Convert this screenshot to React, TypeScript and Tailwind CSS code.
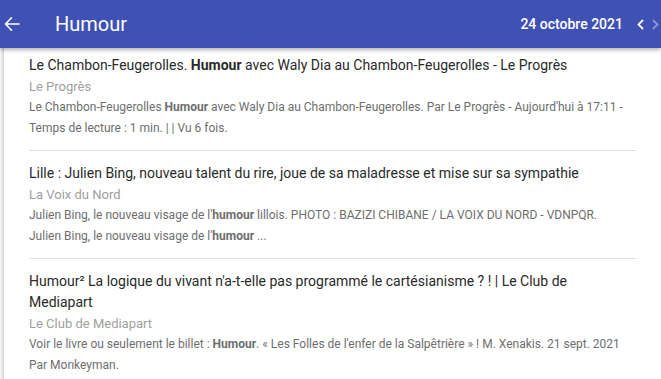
import React from "react";

interface Article {
  title: React.ReactNode;
  source: string;
  snippet: React.ReactNode;
}

const articles: Article[] = [
  {
    title: (
      <>
        Le Chambon-Feugerolles. <b className="font-bold">Humour</b> avec Waly Dia au
        Chambon-Feugerolles - Le Progrès
      </>
    ),
    source: "Le Progrès",
    snippet: (
      <>
        Le Chambon-Feugerolles <b className="font-bold">Humour</b> avec Waly Dia au
        Chambon-Feugerolles. Par Le Progrès - Aujourd'hui à 17:11 - Temps de lecture : 1
        min. | | Vu 6 fois.
      </>
    ),
  },
  {
    title: "Lille : Julien Bing, nouveau talent du rire, joue de sa maladresse et mise sur sa sympathie",
    source: "La Voix du Nord",
    snippet: (
      <>
        Julien Bing, le nouveau visage de l'<b className="font-bold">humour</b> lillois.
        PHOTO : BAZIZI CHIBANE / LA VOIX DU NORD - VDNPQR. Julien Bing, le nouveau visage
        de l'<b className="font-bold">humour</b> ...
      </>
    ),
  },
  {
    title:
      "Humour² La logique du vivant n'a-t-elle pas programmé le cartésianisme ? ! | Le Club de Mediapart",
    source: "Le Club de Mediapart",
    snippet: (
      <>
        Voir le livre ou seulement le billet : <b className="font-bold">Humour</b>. « Les
        Folles de l'enfer de la Salpêtrière » ! M. Xenakis. 21 sept. 2021 Par Monkeyman.
      </>
    ),
  },
];

const ArticleRow: React.FC<{ article: Article; last: boolean }> = ({ article, last }) => {
  return (
    <div className={`pt-3 pb-[11px] ${last ? "" : "border-b border-[#e0e0e0]"}`}>
      <p className="pr-[8px] text-[14px] leading-[21px] text-[#2a2a2a]">{article.title}</p>
      <p className="text-[13px] leading-[21px] text-[#a0a0a0]">{article.source}</p>
      <p className="pr-[6px] text-[12px] leading-[21px] text-[#6e6e6e]">{article.snippet}</p>
    </div>
  );
};

export default function App() {
  return (
    <div
      className="relative h-[379px] w-[661px] overflow-hidden bg-[#f5f5f5]"
      style={{ fontFamily: "Roboto, 'Liberation Sans', sans-serif" }}
    >
      <header className="absolute left-0 top-0 z-10 flex h-12 w-full items-center bg-[#3f51b5] text-white shadow-[0_2px_4px_rgba(0,0,0,0.3)]">
        <svg
          className="ml-1 h-4 w-4"
          viewBox="0 0 16 16"
          fill="none"
          stroke="currentColor"
          strokeWidth="1.6"
          strokeLinecap="round"
          strokeLinejoin="round"
        >
          <path d="M15 8H1.5M7.5 1.8 1.5 8l6 6.2" />
        </svg>
        <span className="ml-[35px] text-[20px] leading-none">Humour</span>
        <span className="ml-auto text-[14px] font-medium">24 octobre 2021</span>
        <div className="ml-[14px] flex w-[24px] shrink-0 items-center gap-[8px]">
          <svg className="h-[11px] w-[7px] shrink-0" viewBox="0 0 7 11" fill="none" stroke="white" strokeWidth="1.8">
            <path d="M6 1 1.5 5.5 6 10" />
          </svg>
          <svg className="h-[11px] w-[7px] shrink-0" viewBox="0 0 7 11" fill="none" stroke="rgba(255,255,255,0.4)" strokeWidth="1.8">
            <path d="M1 1 5.5 5.5 1 10" />
          </svg>
        </div>
      </header>
      <main className="ml-1 mt-[43px] bg-white px-[25px] shadow-[-1px_0_3px_rgba(0,0,0,0.2)]">
        {articles.map((a, i) => (
          <ArticleRow key={i} article={a} last={i === articles.length - 1} />
        ))}
      </main>
    </div>
  );
}
